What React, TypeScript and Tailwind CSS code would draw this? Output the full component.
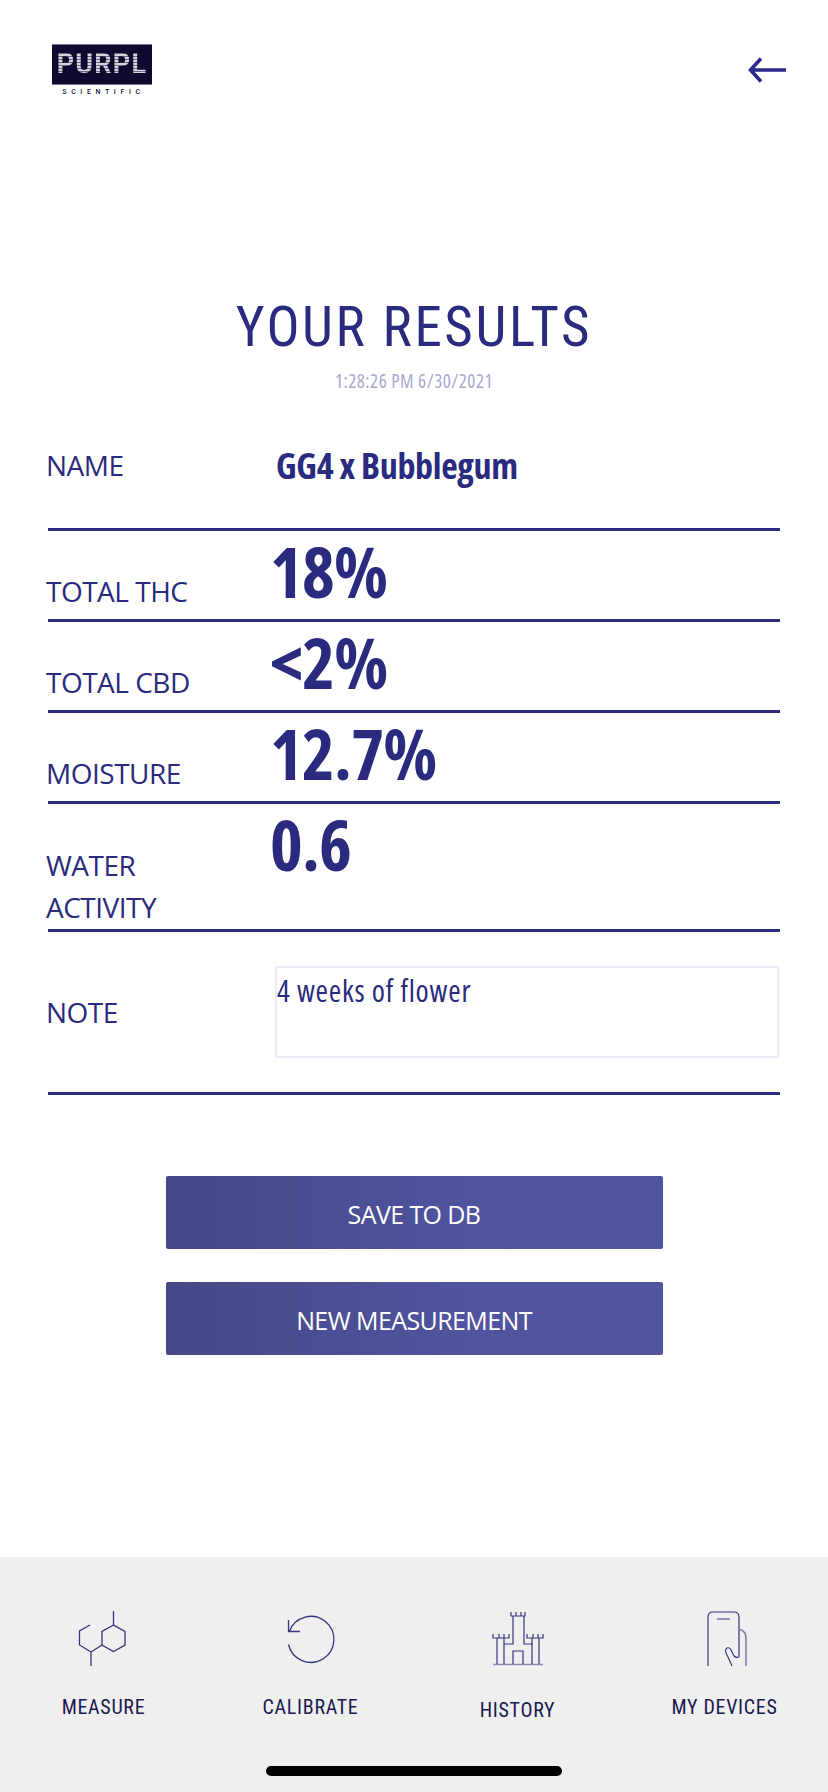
import React from "react";

const NAVY = "text-[#2a2a7e]";
const LABEL = "font-['Open_Sans',sans-serif] text-[28px] leading-[42px] tracking-[-0.5px] text-[#2a2a7e]";

const Row = ({ label, value, h, pb = "pb-[7px]" }: { label: React.ReactNode; value: string; h: string; pb?: string }) => (
  <div className={`flex border-b-[3px] border-[#2a2a7e] ${h}`}>
    <div className={`w-[224px] flex flex-col justify-end ${pb} -ml-[2px]`}>
      <div className={LABEL}>{label}</div>
    </div>
    <div className={`font-['Open_Sans',sans-serif] [font-stretch:75%] font-bold text-[70px] leading-[80px] tracking-[-0.8px] ${NAVY}`}>{value}</div>
  </div>
);

const MeasureIcon = () => (
  <svg width="60" height="60" viewBox="0 0 60 60" fill="none" stroke="#34377f" strokeWidth="1.3" className="translate-x-[3px]">
    <path d="M36.500 0v14l11.500 6.500v13.500L36.500 40.500 25 34V20.500L36.500 14" />
    <path d="M13 14l-10.500 6v14l11.500 7 11-7M14 41v14" />
  </svg>
);

const CalibrateIcon = () => (
  <svg width="60" height="60" viewBox="0 0 60 60" fill="none" stroke="#34377f" strokeWidth="1.3">
    <path d="M7.500 33.500A23 23 0 1 0 8.500 20M7.500 9v11.500H19" />
  </svg>
);

const HistoryIcon = () => (
  <svg width="60" height="60" viewBox="0 0 60 60" fill="none" stroke="#34377f" strokeWidth="1.200">
    <path d="M5 53.500h50" strokeWidth="1.600" stroke="#8a8cb8" />
    <path d="M9 27v26M16 27v26M44 27v26M51 27v26M5 23v4h16v-4M11 23v4M16 23v4M39 23v4h16v-4M45 23v4M50 23v4" />
    <path d="M16 33h9V5h11v28h9M23 1v4h14V1M28 1v4M33 1v4M25 53V40h10v13" />
  </svg>
);

const DevicesIcon = () => (
  <svg width="60" height="60" viewBox="0 0 60 60" fill="none" stroke="#34377f" strokeWidth="1.200">
    <path d="M13 55V6q0-5 5-5h21q5 0 5 5v40M22 8h13" />
    <path d="M44 18q7 2 7 9v28" stroke="#7c7eb0" strokeWidth="1.600" />
    <path d="M37 55q-4-9-6-13-1-4 1-5 3-1 4 2l3 6q2 2 5 1" />
  </svg>
);

const tabs = [
  { label: "MEASURE", icon: <MeasureIcon />, mt: "mt-[24px]" },
  { label: "CALIBRATE", icon: <CalibrateIcon />, mt: "mt-[24px]" },
  { label: "HISTORY", icon: <HistoryIcon />, mt: "mt-[27px]" },
  { label: "MY DEVICES", icon: <DevicesIcon />, mt: "mt-[24px]" },
];

export default function App() {
  return (
    <div className="w-[828px] h-[1792px] bg-white flex flex-col overflow-hidden font-['Open_Sans',sans-serif]">
      <header className="flex justify-between items-start pl-[52px] pr-[42px] pt-[44px] h-[292px] shrink-0">
        <div className="w-[100px]">
          <div className="h-[41px] bg-[#0e0a30] border-y border-[#77758f] flex items-center justify-center">
            <span className="font-['Roboto',sans-serif] font-bold text-[27px] leading-none tracking-[1.200px] text-transparent bg-clip-text bg-[repeating-linear-gradient(180deg,#d5d4dd_0px,#d5d4dd_2px,#6c6a86_2px,#6c6a86_3px)]">PURPL</span>
          </div>
          <div className="text-center font-['Roboto',sans-serif] text-[7px] leading-[10px] tracking-[4.600px] text-[#1a1740] mt-[2px] pl-[3px] font-medium whitespace-nowrap">SCIENTIFIC</div>
        </div>
        <svg width="38" height="26" viewBox="0 0 38 26" fill="none" stroke="#2a2a8c" strokeWidth="3.600" className="mt-[13px]">
          <path d="M2 13h36M13 1.500 2.500 13 13 24.500" />
        </svg>
      </header>

      <div className="text-center">
        <h1 className={`font-['Roboto',sans-serif] [font-stretch:75%] text-[55px] leading-[70px] tracking-[2.600px] font-normal ${NAVY}`}>YOUR RESULTS</h1>
        <div className="[font-stretch:75%] text-[19px] leading-[24px] tracking-[0.5px] text-[#a9a8cf] mt-[7px]">1:28:26 PM 6/30/2021</div>
      </div>

      <div className="ml-[48px] w-[732px] mt-[15px]">
        <div className="flex border-b-[3px] border-[#2a2a7e] h-[123px]">
          <div className={`w-[230px] pt-[36px] -ml-[2px] ${LABEL}`}>NAME</div>
          <div className={`[font-stretch:75%] font-bold text-[36px] leading-[45px] tracking-[-0.3px] pt-[35px] ${NAVY}`}>GG4 x Bubblegum</div>
        </div>
        <Row label="TOTAL THC" value="18%" h="h-[91px]" />
        <Row label="TOTAL CBD" value="<2%" h="h-[91px]" />
        <Row label="MOISTURE" value="12.7%" h="h-[91px]" />
        <Row label={<>WATER<br />ACTIVITY</>} value="0.6" h="h-[128px]" pb="pb-[1px]" />
        <div className="flex items-center border-b-[3px] border-[#2a2a7e] h-[163px]">
          <div className={`w-[229px] -ml-[2px] ${LABEL}`}>NOTE</div>
          <div className={`w-[504px] h-[92px] border-2 border-[#ebebf5] [font-stretch:75%] text-[30px] leading-[45px] tracking-[0.8px] ${NAVY}`}>4 weeks of flower</div>
        </div>
      </div>

      <div className="flex flex-col items-center gap-[33px] mt-[81px]">
        <button className="w-[497px] h-[73px] pt-[4px] rounded-[2px] bg-gradient-to-r from-[#454786] to-[#50549e] to-60% text-white text-[25px] tracking-[-0.6px]">SAVE TO DB</button>
        <button className="w-[497px] h-[73px] pt-[4px] rounded-[2px] bg-gradient-to-r from-[#454786] to-[#50549e] to-60% text-white text-[25px] tracking-[-0.6px]">NEW MEASUREMENT</button>
      </div>

      <nav className="mt-auto h-[235px] bg-[#efefef] relative">
        <div className="grid grid-cols-4 pt-[54px]">
          {tabs.map((t) => (
            <div key={t.label} className="flex flex-col items-center">
              {t.icon}
              <div className={`font-['Roboto',sans-serif] [font-stretch:75%] text-[20px] leading-[24px] tracking-[0.700px] text-[#1c1850] ${t.mt}`}>{t.label}</div>
            </div>
          ))}
        </div>
        <div className="absolute left-[266px] bottom-[16px] w-[296px] h-[10px] rounded-full bg-black" />
      </nav>
    </div>
  );
}
